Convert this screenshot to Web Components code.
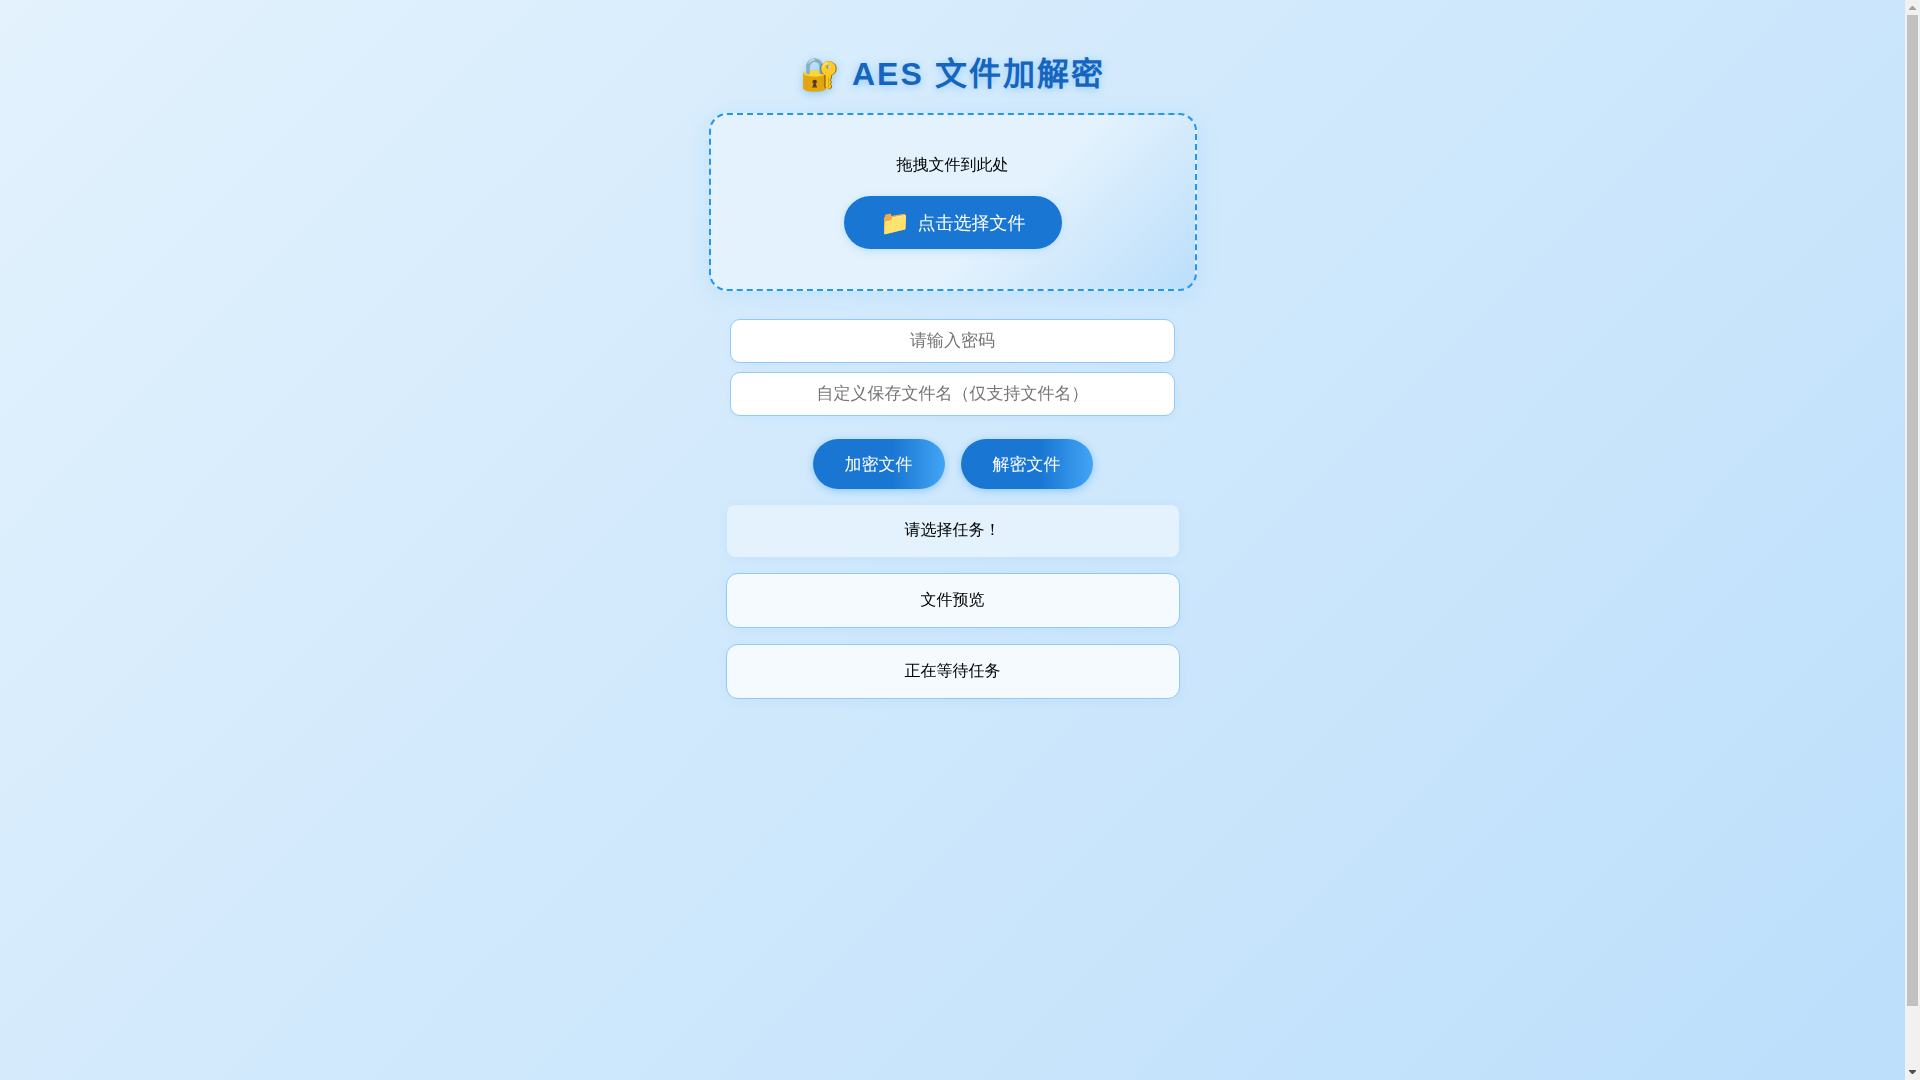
<!DOCTYPE html>
<html lang="zh-CN">
<head>
<meta charset="UTF-8">
<meta name="viewport" content="width=device-width, initial-scale=1">
<title>AES 文件加解密</title>
<style>
    body {
        display: flex;
        margin: 0;
        min-height: 100vh;
        font-family: "Liberation Sans", "WenQuanYi Zen Hei", "Noto Sans CJK SC", sans-serif;
        font-size: 16px;
        color: #000;
    }
</style>
</head>
<body>
<aes-app>
    <aes-title>🔐 AES 文件加解密</aes-title>
    <drop-zone>拖拽文件到此处</drop-zone>
    <text-field type="password" placeholder="请输入密码"></text-field>
    <text-field type="text" placeholder="自定义保存文件名（仅支持文件名）"></text-field>
    <action-bar>
        <action-button>加密文件</action-button>
        <action-button>解密文件</action-button>
    </action-bar>
    <info-panel kind="status">请选择任务！</info-panel>
    <info-panel>文件预览</info-panel>
    <info-panel>正在等待任务</info-panel>
</aes-app>
<scroll-rail aria-hidden="true"></scroll-rail>

<script>
// Clone a template string into an open shadow root
function attachTemplate(host, html) {
    const template = document.createElement('template');
    template.innerHTML = html;
    host.attachShadow({ mode: 'open' });
    host.shadowRoot.appendChild(template.content.cloneNode(true));
}

// Page column
class AesApp extends HTMLElement {
    constructor() {
        super();
        attachTemplate(this, `
        <style>
            :host {
                display: block;
                flex: 1;
                min-width: 0;
                box-sizing: border-box;
                padding: 50px 16px 32px;
                background: linear-gradient(135deg, #e3f2fd 0%, #bbdefb 100%) 0 0 / 100% calc(100% + 64px) no-repeat;
            }
            main {
                display: flex;
                flex-direction: column;
                align-items: center;
                max-width: 488px;
                margin: 0 auto;
            }
        </style>
        <main><slot></slot></main>
        `);
    }
}

class AesTitle extends HTMLElement {
    constructor() {
        super();
        attachTemplate(this, `
        <style>
            :host {
                display: block;
                margin-bottom: 14px;
            }
            h1 {
                margin: 0;
                font-family: "Liberation Sans", sans-serif;
                font-size: 32px;
                line-height: 49px;
                letter-spacing: 2px;
                white-space: nowrap;
                color: #1565c0;
                text-shadow: 0 2px 8px #90caf9;
            }
        </style>
        <h1><slot></slot></h1>
        `);
    }
}

// Drag target with the file picker button
class DropZone extends HTMLElement {
    constructor() {
        super();
        attachTemplate(this, `
        <style>
            :host {
                display: block;
                width: 100%;
                margin-bottom: 28px;
            }
            section {
                display: flex;
                flex-direction: column;
                align-items: center;
                gap: 19px;
                padding: 38px 16px 40px;
                border: 2px dashed #2196f3;
                border-radius: 18px;
                background: linear-gradient(135deg, #e3f2fd 60%, #bbdefb 100%);
                box-shadow: 0 4px 24px rgba(33, 150, 243, 0.1);
            }
            p {
                margin: 0;
                line-height: 24px;
            }
            button {
                display: flex;
                align-items: center;
                gap: 8px;
                height: 53px;
                padding: 0 36px;
                border: none;
                border-radius: 27px;
                background: #1976d2;
                color: #fff;
                font-family: inherit;
                font-size: 18px;
                cursor: pointer;
                box-shadow: 0 2px 8px #bbdefb;
            }
            .icon {
                font-size: 24px;
            }
        </style>
        <section>
            <p><slot></slot></p>
            <button type="button"><span class="icon">📁</span><span>点击选择文件</span></button>
            <input type="file" hidden>
        </section>
        `);

        const input = this.shadowRoot.querySelector('input');
        this.shadowRoot.querySelector('button').addEventListener('click', function(){
            input.click();
        });
    }
}

class TextField extends HTMLElement {
    constructor() {
        super();
        attachTemplate(this, `
        <style>
            :host {
                display: block;
                width: 100%;
                max-width: 445px;
                margin-bottom: 9px;
            }
            input {
                display: block;
                box-sizing: border-box;
                width: 100%;
                height: 44px;
                padding: 0 16px;
                border: 1px solid #90caf9;
                border-radius: 10px;
                background: #fff;
                font-family: inherit;
                font-size: 17px;
                text-align: center;
                box-shadow: 0 2px 8px rgba(33, 150, 243, 0.06);
            }
        </style>
        <input>
        `);
    }

    connectedCallback() {
        const input = this.shadowRoot.querySelector('input');
        input.type = this.getAttribute('type');
        input.placeholder = this.getAttribute('placeholder');
        input.setAttribute('aria-label', input.placeholder);
    }
}

class ActionBar extends HTMLElement {
    constructor() {
        super();
        attachTemplate(this, `
        <style>
            :host {
                display: flex;
                gap: 16px;
                margin: 14px 0 16px;
            }
        </style>
        <slot></slot>
        `);
    }
}

class ActionButton extends HTMLElement {
    constructor() {
        super();
        attachTemplate(this, `
        <style>
            :host {
                display: block;
            }
            button {
                height: 50px;
                padding: 0 32px;
                border: none;
                border-radius: 25px;
                background: linear-gradient(90deg, #1976d2 60%, #42a5f5 100%);
                color: #fff;
                font-family: inherit;
                font-size: 17px;
                cursor: pointer;
                box-shadow: 0 2px 8px #90caf9;
            }
        </style>
        <button type="button"><slot></slot></button>
        `);
    }
}

// Message box, kind="status" is the flat one without a border
class InfoPanel extends HTMLElement {
    constructor() {
        super();
        attachTemplate(this, `
        <style>
            :host {
                display: block;
                box-sizing: border-box;
                width: 100%;
                max-width: 454px;
                margin-bottom: 16px;
                padding: 14px 16px 15px;
                border: 1px solid #90caf9;
                border-radius: 12px;
                background: #f5faff;
                line-height: 24px;
                text-align: center;
                box-shadow: 0 2px 12px rgba(33, 150, 243, 0.08);
            }
            :host([kind="status"]) {
                max-width: 452px;
                padding: 13px 16px 15px;
                border: none;
                border-radius: 8px;
                background: #e3f2fd;
            }
        </style>
        <slot></slot>
        `);
    }
}

// Scroll rail on the right edge of the window
class ScrollRail extends HTMLElement {
    constructor() {
        super();
        attachTemplate(this, `
        <style>
            :host {
                display: flex;
                flex-direction: column;
                flex: none;
                width: 15px;
                height: 100vh;
                background: #f1f1f1;
            }
            svg {
                display: block;
                flex: none;
                width: 15px;
                height: 15px;
            }
            .track {
                flex: 1;
                padding: 0 2px;
            }
            .thumb {
                height: 94.4%;
                background: #c1c1c1;
            }
        </style>
        <svg viewBox="0 0 15 15"><path d="M4 10L4 9L7 6L8 6L11 9L11 10Z" fill="#a3a3a3"/></svg>
        <div class="track"><div class="thumb"></div></div>
        <svg viewBox="0 0 15 15"><path d="M4 5L11 5L11 6L8 9L7 9L4 6Z" fill="#505050"/></svg>
        `);
    }
}

customElements.define('aes-app', AesApp);
customElements.define('aes-title', AesTitle);
customElements.define('drop-zone', DropZone);
customElements.define('text-field', TextField);
customElements.define('action-bar', ActionBar);
customElements.define('action-button', ActionButton);
customElements.define('info-panel', InfoPanel);
customElements.define('scroll-rail', ScrollRail);
</script>
</body>
</html>
